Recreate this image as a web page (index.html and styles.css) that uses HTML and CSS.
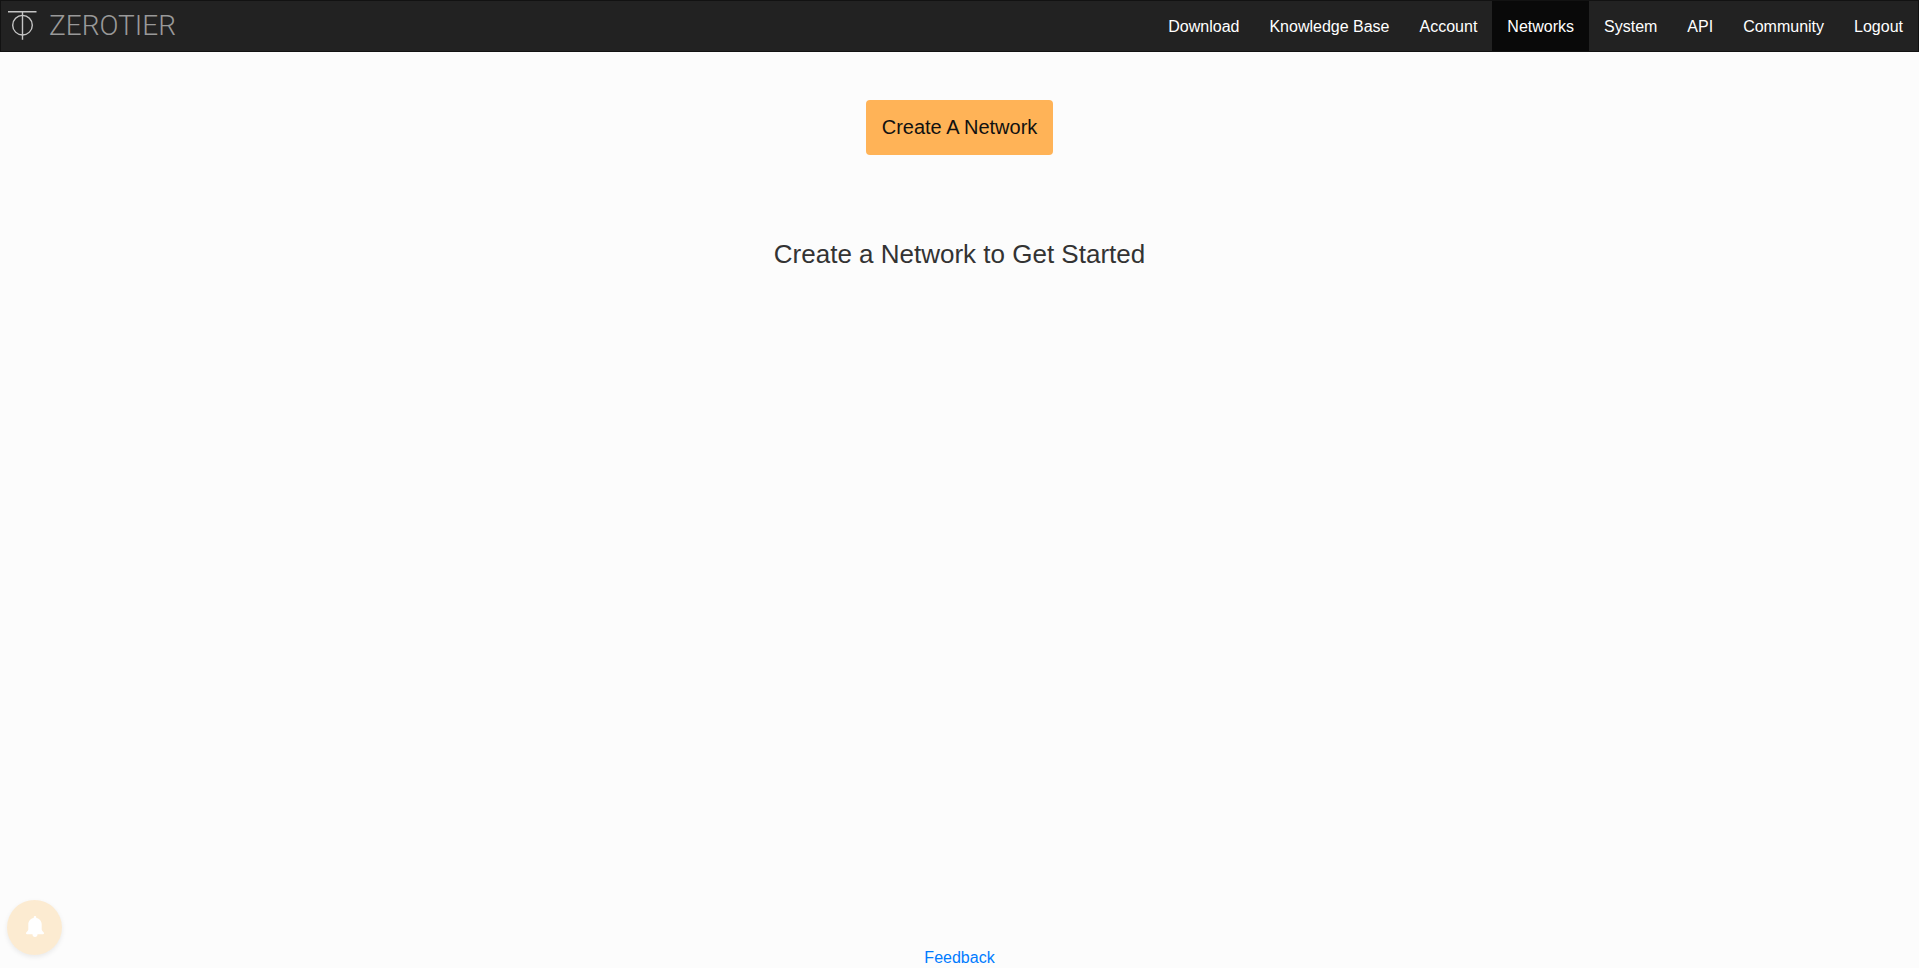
FILE: index.html
```html
<!DOCTYPE html>
<html lang="en">
<head>
<meta charset="utf-8">
<meta name="viewport" content="width=device-width, initial-scale=1">
<title>ZeroTier Central</title>
<link rel="stylesheet" href="styles.css">
</head>
<body>
<header class="navbar">
  <a class="brand" href="#" aria-label="ZeroTier home">
    <svg class="brand-mark" viewBox="0 0 30 30" aria-hidden="true">
      <path d="M1 .7h28.500M15.500.7v28"/>
      <circle cx="15.500" cy="14.200" r="9.800"/>
    </svg>
    <span class="brand-name">ZEROTIER</span>
  </a>
  <nav class="nav-links">
    <a href="#">Download</a>
    <a href="#">Knowledge Base</a>
    <a href="#">Account</a>
    <a class="active" href="#" aria-current="page">Networks</a>
    <a href="#">System</a>
    <a href="#">API</a>
    <a href="#">Community</a>
    <a href="#">Logout</a>
  </nav>
</header>
<main class="content">
  <button class="create-button" type="button">Create A Network</button>
  <h1 class="empty-title">Create a Network to Get Started</h1>
</main>
<footer class="footer">
  <a href="#">Feedback</a>
</footer>
<button class="notify" type="button" aria-label="Notifications">
  <svg class="bell" viewBox="0 0 18 22" aria-hidden="true">
    <path d="M9 0a1.300 1.300 0 0 1 1.300 1.300v.8C13.700 2.700 15.700 5.400 15.700 8.500V13.500C15.700 15 18 15.800 18 17.200Q18 18.300 16.900 18.300H11.500a2.500 2.700 0 0 1-5 0H1.100Q0 18.300 0 17.200C0 15.800 2.300 15 2.300 13.500V8.500C2.300 5.400 4.300 2.700 7.700 2.100V1.300A1.300 1.300 0 0 1 9 0z"/>
  </svg>
</button>
</body>
</html>
```

FILE: styles.css
```css
* { box-sizing: border-box; }

body {
  margin: 0;
  min-height: 100vh;
  display: flex;
  flex-direction: column;
  background: #fcfcfc;
  color: #333;
  font: 16px/24px "Liberation Sans", Arial, sans-serif;
}

.navbar {
  display: flex;
  justify-content: space-between;
  border: 1px solid #121212;
  background: #222;
}

.brand {
  display: flex;
  align-items: center;
  gap: 12px;
  padding-left: 6px;
  color: #999;
  text-decoration: none;
}

.brand-mark {
  width: 30px;
  height: 30px;
  overflow: visible;
  fill: none;
  stroke: #c4c4c4;
  stroke-width: 1.4;
}

.brand-name {
  font: 300 28px/50px Roboto, sans-serif;
}

.nav-links { display: flex; }

.nav-links a {
  padding: 14px 15px 12px;
  color: #fff;
  text-decoration: none;
}

.nav-links .active { background: #090909; }

.content {
  flex: 1;
  display: flex;
  flex-direction: column;
  align-items: center;
  padding-top: 48px;
}

.create-button {
  padding: 12px 16px;
  border: 0;
  border-radius: 4px;
  background: #ffb357;
  color: #111;
  font: 20px/31px "Liberation Sans", Arial, sans-serif;
}

.empty-title {
  margin: 83px 0 0;
  font-size: 26px;
  font-weight: 400;
  line-height: 32px;
}

.footer {
  line-height: 20px;
  text-align: center;
}

.footer a {
  color: #007bff;
  text-decoration: none;
}

.notify {
  position: fixed;
  left: 7px;
  bottom: 13px;
  display: flex;
  align-items: center;
  justify-content: center;
  width: 55px;
  height: 55px;
  padding: 0 0 2px;
  border: 0;
  border-radius: 50%;
  background: #fcebd1;
  box-shadow: 0 2px 5px rgba(0, 0, 0, 0.08);
}

.bell {
  width: 18px;
  height: 22px;
  fill: #fff;
}
```
